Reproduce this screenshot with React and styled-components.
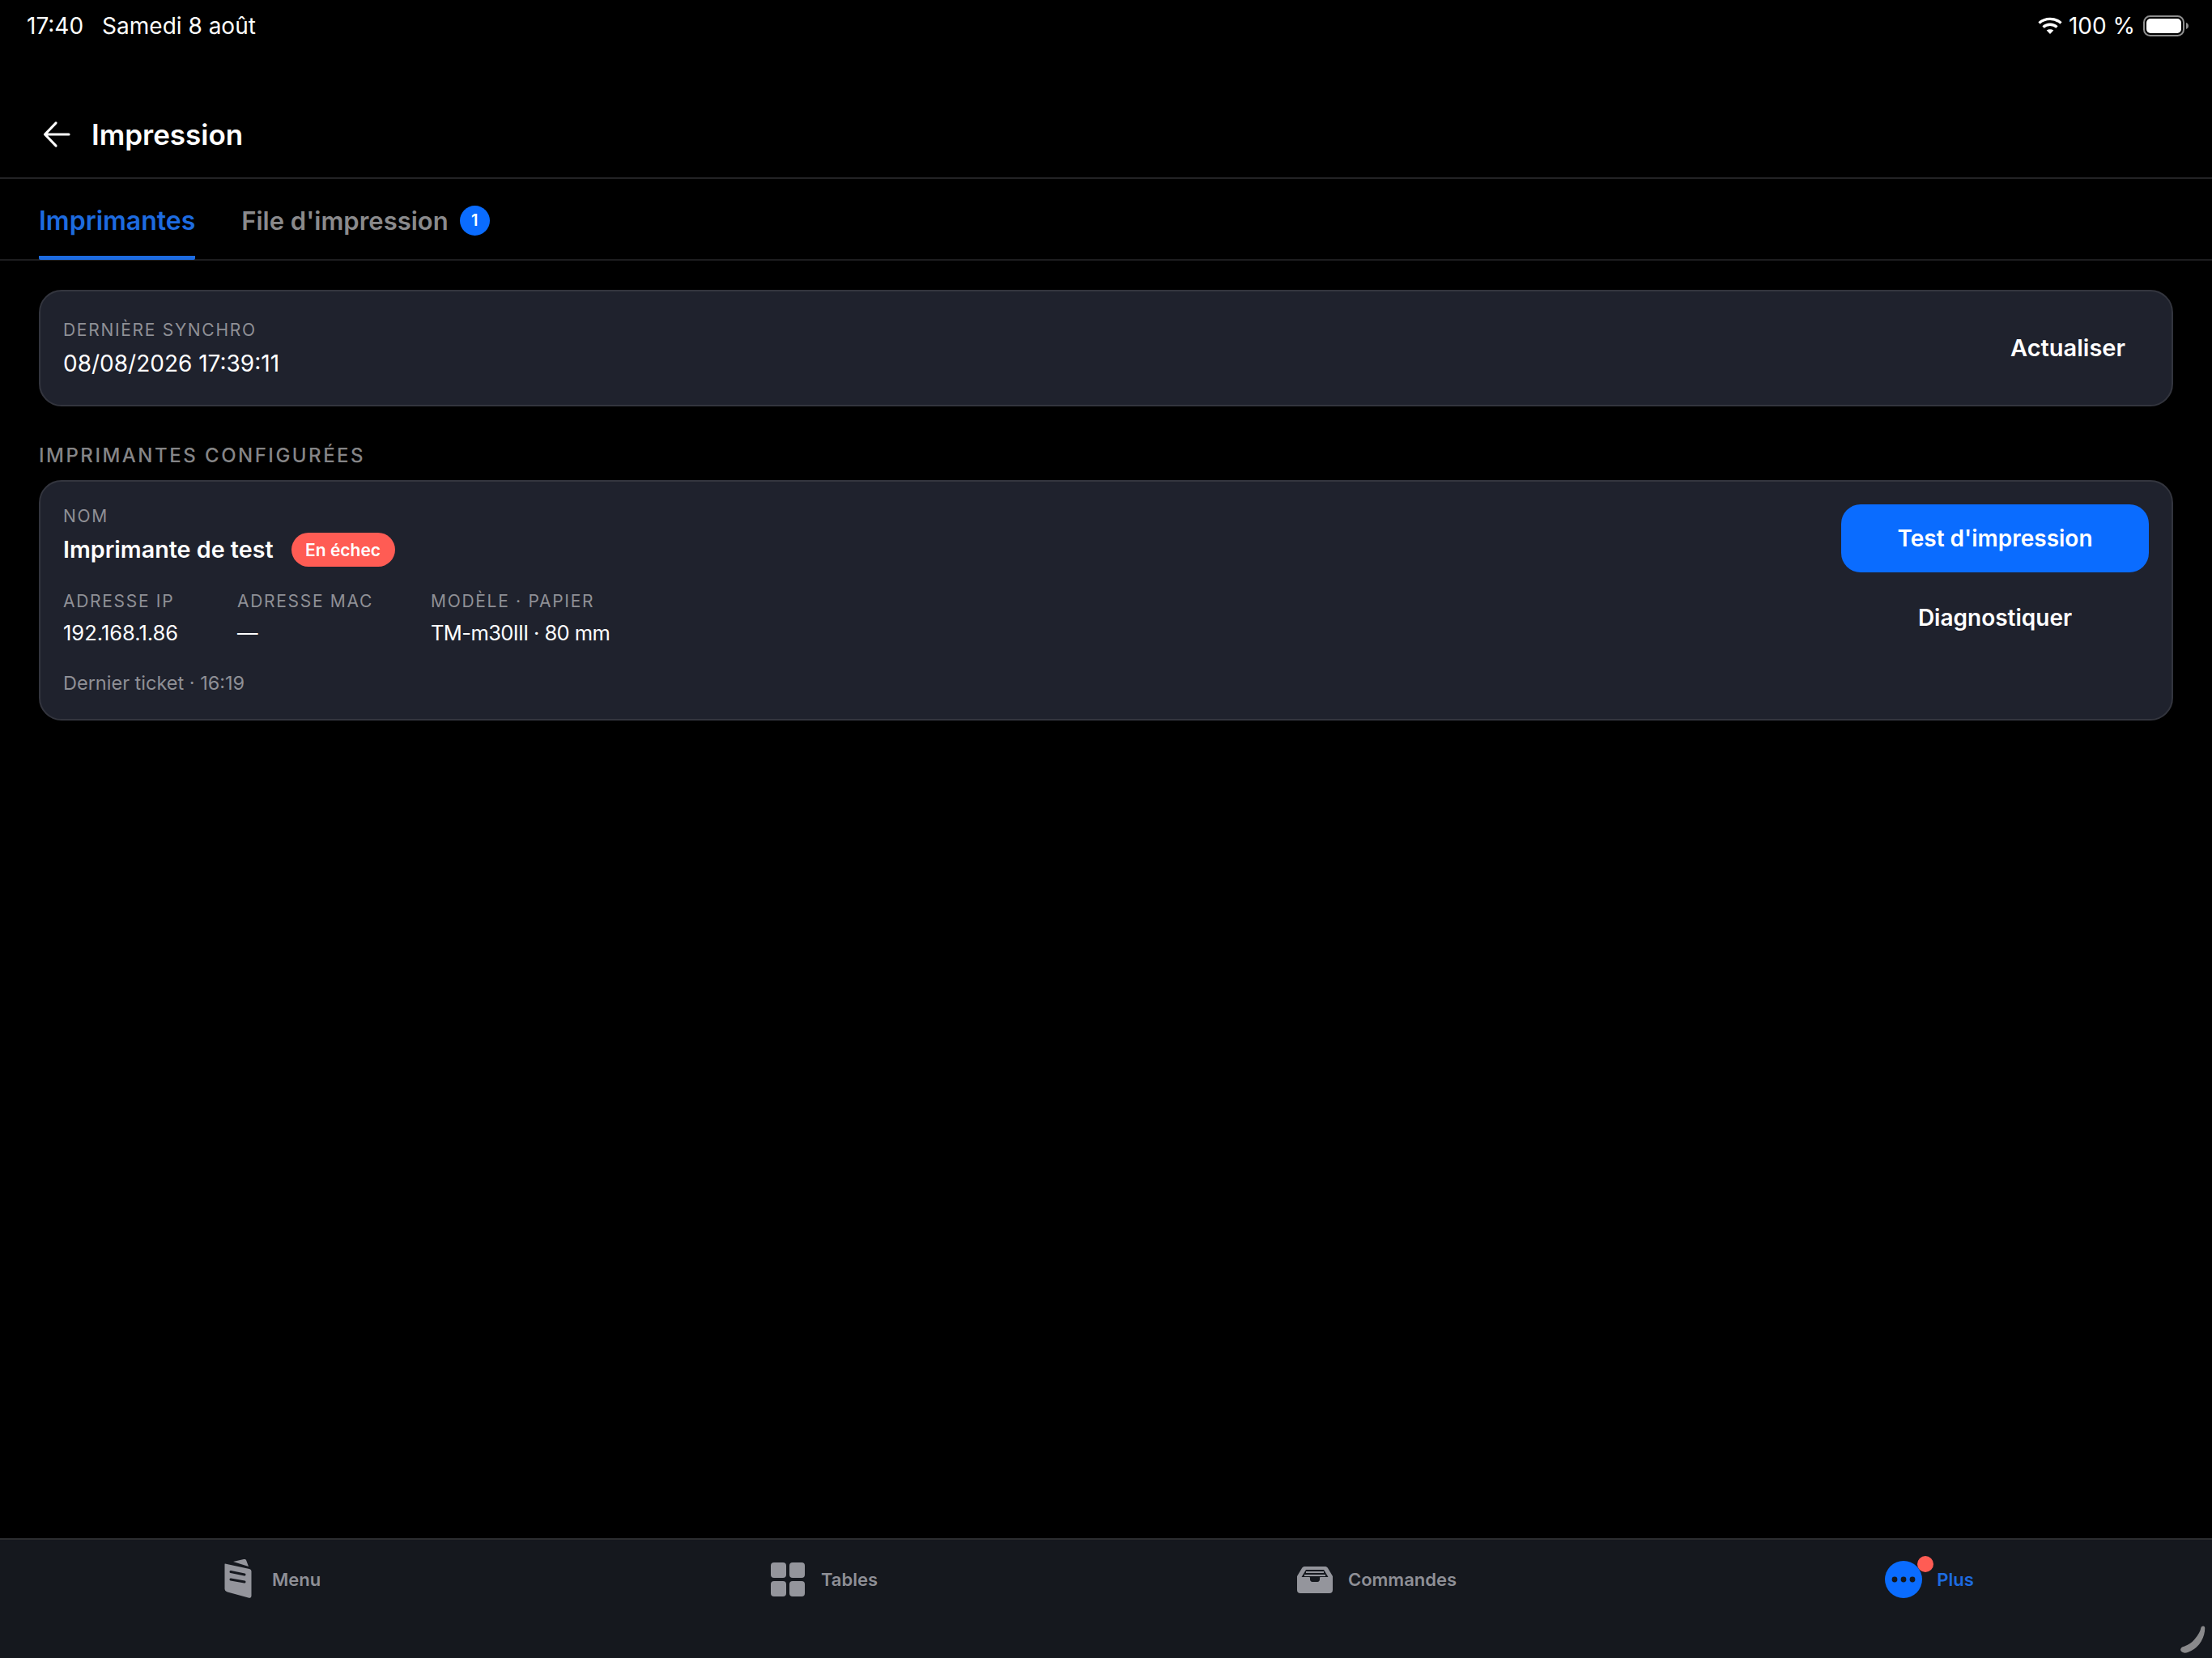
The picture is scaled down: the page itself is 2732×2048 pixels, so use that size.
import React from 'react';
import styled, { createGlobalStyle } from 'styled-components';

const GlobalStyle = createGlobalStyle`
  html, body {
    margin: 0;
    padding: 0;
    background: #000;
  }
  * {
    box-sizing: border-box;
  }
`;

const App = () => {
  return (
    <Screen>
      <GlobalStyle />
      <StatusBar>
        <StatusLeft>
          <span>17:40</span>
          <span>Samedi 8 août</span>
        </StatusLeft>
        <StatusRight>
          <WifiIcon />
          <BatteryText>100 %</BatteryText>
          <BatteryIcon />
        </StatusRight>
      </StatusBar>

      <Header>
        <BackButton>
          <svg width="36" height="36" viewBox="0 0 36 36" fill="none" stroke="#fff" strokeWidth="3.2" strokeLinecap="round" strokeLinejoin="round">
            <path d="M33 18H4M17 4 3.5 18 17 32" />
          </svg>
        </BackButton>
        <Title>Impression</Title>
      </Header>

      <Tabs>
        <Tab $active>Imprimantes</Tab>
        <Tab>
          File d'impression
          <TabCount>1</TabCount>
        </Tab>
      </Tabs>

      <Content>
        <SyncCard>
          <div>
            <Label>Dernière synchro</Label>
            <SyncDate>08/08/2026 17:39:11</SyncDate>
          </div>
          <RefreshButton>Actualiser</RefreshButton>
        </SyncCard>

        <SectionLabel>Imprimantes configurées</SectionLabel>

        <PrinterCard>
          <PrinterInfo>
            <Label>Nom</Label>
            <NameRow>
              <PrinterName>Imprimante de test</PrinterName>
              <StatusBadge>En échec</StatusBadge>
            </NameRow>
            <Specs>
              <Spec $width={215}>
                <Label>Adresse IP</Label>
                <SpecValue>192.168.1.86</SpecValue>
              </Spec>
              <Spec $width={239}>
                <Label>Adresse MAC</Label>
                <SpecValue>—</SpecValue>
              </Spec>
              <Spec>
                <Label>Modèle · Papier</Label>
                <SpecValue $tight>TM-m30III · 80 mm</SpecValue>
              </Spec>
            </Specs>
            <LastTicket>Dernier ticket · 16:19</LastTicket>
          </PrinterInfo>
          <PrinterActions>
            <PrimaryButton>Test d'impression</PrimaryButton>
            <GhostButton>Diagnostiquer</GhostButton>
          </PrinterActions>
        </PrinterCard>
      </Content>

      <TabBar>
        <NavItem>
          <NavIcon>
            <MenuIcon />
          </NavIcon>
          <NavLabel>Menu</NavLabel>
        </NavItem>
        <NavItem>
          <NavIcon>
            <TablesIcon />
          </NavIcon>
          <NavLabel>Tables</NavLabel>
        </NavItem>
        <NavItem>
          <NavIcon>
            <OrdersIcon />
          </NavIcon>
          <NavLabel>Commandes</NavLabel>
        </NavItem>
        <NavItem>
          <NavIcon>
            <MoreIcon />
            <NavDot />
          </NavIcon>
          <NavLabel $active>Plus</NavLabel>
        </NavItem>
        <CornerMark width="34" height="34" viewBox="0 0 34 34">
          <path d="M29.500 1.500c1-.4 2 .2 2 1.500 0 6-1.500 11-4.500 16-3.500 6-9 10.500-15.500 13-3 1.100-6.500 1-8-.7-1.200-1.400-.5-3.500 1.500-4.300 5-1.500 11-4.500 15-9.500 4.500-5.500 7.500-10.500 8-14.500.1-.7.500-1.200 1.500-1.500z" fill="#8a8a8c" stroke="#8a8a8c" strokeWidth="1.500" />
        </CornerMark>
      </TabBar>
    </Screen>
  );
};

export default App;

const WifiIcon = () => (
  <svg width="30" height="22" viewBox="0 0 30 22" fill="none" stroke="#fff" strokeWidth="3.4">
    <path d="M1.500 7.500C9 .7 21 .7 28.500 7.500" />
    <path d="M6.500 12.500C11.500 8.200 18.500 8.200 23.500 12.500" />
    <path d="M15 21 10.700 16.600C13 14.700 17 14.700 19.300 16.600Z" fill="#fff" stroke="none" />
  </svg>
);

const BatteryIcon = () => (
  <svg width="56" height="26" viewBox="0 0 56 26" fill="none">
    <rect x="1" y="1" width="49" height="24" rx="7.500" stroke="#8e8e8e" strokeWidth="2" />
    <rect x="4" y="4" width="43" height="18" rx="5" fill="#fff" />
    <path d="M53 9c1.800.6 3 2.200 3 4s-1.200 3.400-3 4z" fill="#8e8e8e" />
  </svg>
);

const MenuIcon = () => (
  <svg width="48" height="50" viewBox="0 0 48 50" fill="none">
    <path d="M17 3 30 0c1.500-.4 2.700.2 3.200 1.500L36 9z" fill="#94959c" />
    <path d="M7 5.500 37 12c1.500.3 2.500 1.500 2.500 3v30c0 2-1.500 3.300-3 2.700L10 40.500c-2.200-.7-3.500-2-3.500-4V7c0-1 .1-1.500.5-1.500z" fill="#94959c" />
    <path d="M14 15.500 31 19M14 25 31 28" stroke="#15181e" strokeWidth="3" strokeLinecap="round" />
  </svg>
);

const TablesIcon = () => (
  <svg width="44" height="44" viewBox="0 0 44 44" fill="#94959c">
    <rect x="1" y="1" width="19" height="19" rx="4" />
    <rect x="24" y="1" width="19" height="19" rx="4" />
    <rect x="1" y="24" width="19" height="19" rx="4" />
    <rect x="24" y="24" width="19" height="19" rx="4" />
  </svg>
);

const OrdersIcon = () => (
  <svg width="46" height="34" viewBox="0 0 46 34" fill="none">
    <path d="M11 1h24c2 0 3 .6 4 2l6 10v17c0 2.500-1.500 4-4 4H5c-2.500 0-4-1.500-4-4V13L7 3c1-1.400 2-2 4-2z" fill="#94959c" />
    <path d="M12 5h22l5.500 9H30c-.5 0-1 .5-1 1v2c0 1.500-1 3-3 3h-6c-2 0-3-1.500-3-3v-2c0-.5-.5-1-1-1H6.500z" fill="#15181e" />
    <path d="M12 8h22M10 12h26" stroke="#94959c" strokeWidth="2" />
  </svg>
);

const MoreIcon = () => (
  <svg width="46" height="46" viewBox="0 0 46 46" fill="#0a6cff">
    <circle cx="23" cy="23" r="23" />
    <circle cx="12" cy="23" r="3.400" fill="#15181e" />
    <circle cx="23" cy="23" r="3.400" fill="#15181e" />
    <circle cx="34" cy="23" r="3.400" fill="#15181e" />
  </svg>
);

const Screen = styled.div`
  display: flex;
  flex-direction: column;
  width: 2732px;
  height: 2048px;
  overflow: hidden;
  background: #000;
  color: #fff;
  font-family: Inter, 'Liberation Sans', sans-serif;
`;

const StatusBar = styled.div`
  display: flex;
  align-items: center;
  justify-content: space-between;
  height: 64px;
  padding: 0 29px 0 33px;
  font-size: 28px;
  flex-shrink: 0;
`;

const StatusLeft = styled.div`
  display: flex;
  gap: 23px;
`;

const StatusRight = styled.div`
  display: flex;
  align-items: center;
`;

const BatteryText = styled.span`
  margin: 0 10px 0 8px;
`;

const Header = styled.div`
  display: flex;
  align-items: flex-end;
  height: 157px;
  padding: 0 0 31px 52px;
  border-bottom: 2px solid #232325;
  flex-shrink: 0;
`;

const BackButton = styled.div`
  display: flex;
  align-items: center;
  width: 61px;
  height: 44px;
`;

const Title = styled.h1`
  margin: 0;
  font-size: 35px;
  line-height: 44px;
  font-weight: 600;
`;

const Tabs = styled.div`
  display: flex;
  gap: 57px;
  height: 101px;
  padding: 0 48px;
  border-bottom: 2px solid #1d1d1f;
  flex-shrink: 0;
`;

const Tab = styled.div`
  display: flex;
  align-items: center;
  gap: 14px;
  height: 100px;
  padding-top: 7px;
  font-size: ${({ $active }) => ($active ? '32px' : '31px')};
  font-weight: 600;
  color: ${({ $active }) => ($active ? '#1d6be0' : '#8a8a8c')};
  border-bottom: 5px solid ${({ $active }) => ($active ? '#1d6be0' : 'transparent')};
  border-radius: 0 0 2px 2px;
`;

const TabCount = styled.span`
  display: flex;
  align-items: center;
  justify-content: center;
  width: 37px;
  height: 37px;
  border-radius: 50%;
  background: #0a6cff;
  color: #fff;
  font-size: 20px;
  font-weight: 600;
`;

const Content = styled.div`
  flex: 1;
  padding: 36px 48px 0;
`;

const Card = styled.div`
  display: flex;
  justify-content: space-between;
  background: #1f222d;
  border: 2px solid #33353e;
  border-radius: 28px;
`;

const SyncCard = styled(Card)`
  align-items: center;
  height: 144px;
  padding: 0 28px;
`;

const Label = styled.div`
  font-size: 21px;
  line-height: 26px;
  letter-spacing: 1.7px;
  text-transform: uppercase;
  color: #8f9096;
`;

const SyncDate = styled.div`
  margin-top: 11px;
  font-size: 28px;
  line-height: 34px;
`;

const RefreshButton = styled.button`
  padding: 0;
  margin: 0 29px 2px 0;
  border: none;
  background: none;
  color: #fff;
  font-family: inherit;
  font-size: 29px;
  font-weight: 600;
`;

const SectionLabel = styled.h2`
  margin: 46px 0 15px;
  font-size: 24px;
  line-height: 30px;
  font-weight: 500;
  letter-spacing: 2.5px;
  text-transform: uppercase;
  color: #858587;
`;

const PrinterCard = styled(Card)`
  height: 297px;
  padding: 28px 28px 0;
`;

const PrinterInfo = styled.div`
  display: flex;
  flex-direction: column;
  padding-top: 2px;
`;

const NameRow = styled.div`
  display: flex;
  align-items: center;
  gap: 22px;
  margin-top: 7px;
`;

const PrinterName = styled.div`
  font-size: 28.7px;
  line-height: 36px;
  font-weight: 600;
`;

const StatusBadge = styled.span`
  display: flex;
  align-items: center;
  justify-content: center;
  width: 128px;
  height: 42px;
  border-radius: 21px;
  background: #ff5c54;
  font-size: 21px;
  font-weight: 600;
`;

const Specs = styled.div`
  display: flex;
  margin-top: 30px;
`;

const Spec = styled.div`
  width: ${({ $width }) => ($width ? `${$width}px` : 'auto')};
`;

const SpecValue = styled.div`
  margin-top: 10px;
  font-size: 25.5px;
  line-height: 32px;
  letter-spacing: ${({ $tight }) => ($tight ? '-0.6px' : '0')};
`;

const LastTicket = styled.div`
  margin-top: 31px;
  font-size: 23.5px;
  line-height: 30px;
  color: #8f9096;
`;

const PrinterActions = styled.div`
  display: flex;
  flex-direction: column;
  gap: 14px;
  width: 380px;
`;

const PrimaryButton = styled.button`
  height: 84px;
  border: none;
  border-radius: 24px;
  background: #0a6cff;
  color: #fff;
  font-family: inherit;
  font-size: 28px;
  font-weight: 600;
`;

const GhostButton = styled(PrimaryButton)`
  background: none;
`;

const TabBar = styled.div`
  position: relative;
  display: grid;
  grid-template-columns: repeat(4, 1fr);
  align-items: start;
  height: 148px;
  border-top: 2px solid #2c2d30;
  background: #15181e;
  flex-shrink: 0;
`;

const NavItem = styled.div`
  display: flex;
  align-items: center;
  justify-content: center;
  gap: 17px;
  height: 98px;
  padding-right: 16px;
`;

const NavIcon = styled.div`
  position: relative;
  display: flex;
  align-items: center;
  justify-content: center;
  width: 48px;
  height: 48px;
`;

const NavDot = styled.span`
  position: absolute;
  top: -5px;
  right: -13px;
  width: 20px;
  height: 20px;
  border-radius: 50%;
  background: #ff5c54;
`;

const NavLabel = styled.span`
  font-size: 22px;
  font-weight: 600;
  color: ${({ $active }) => ($active ? '#1d6be0' : '#8e8f96')};
`;

const CornerMark = styled.svg`
  position: absolute;
  right: 7px;
  bottom: 6px;
`;
